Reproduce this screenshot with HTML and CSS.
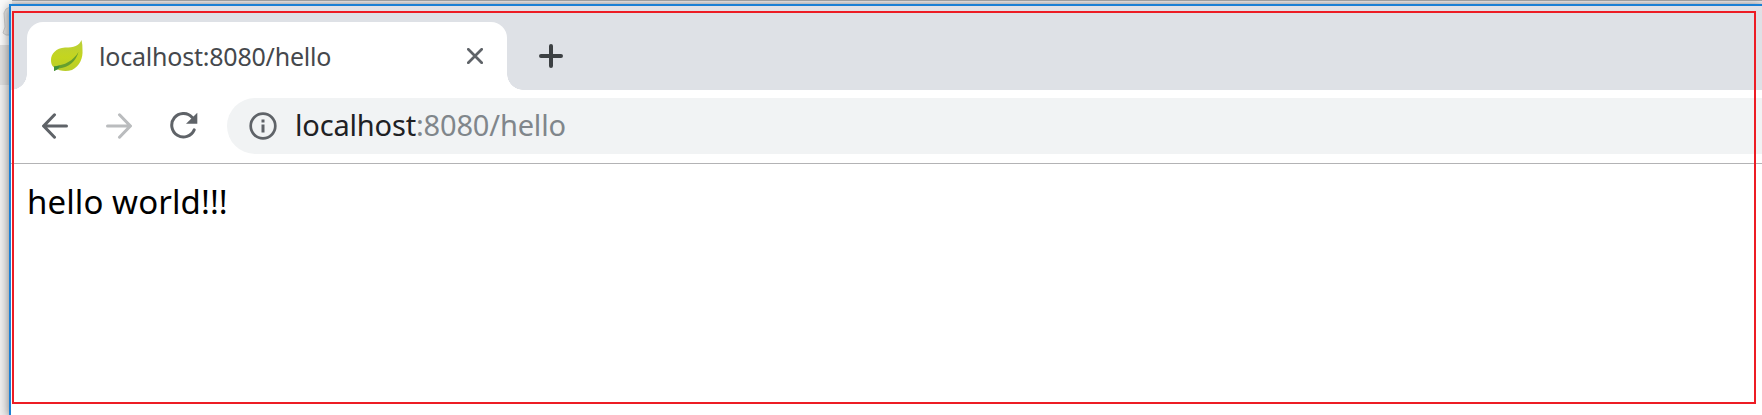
FILE: index.html
```
<!DOCTYPE html>
<html lang="en">
<head>
<meta charset="utf-8">
<title>localhost:8080/hello</title>
<link rel="stylesheet" href="styles.css">
</head>
<body>
<div class="desktop">
  <svg class="backdrop" width="12" height="415" viewBox="0 0 12 415"><path d="M0 0H12V45H0Z" fill="#fafafa"/><path d="M0 45H12V85H0Z" fill="#dfdfdf"/><path d="M12 6L6 9L4 13L5 27L3 33L6 35H12" fill="#e6e6e6" stroke="#ccc"/></svg>
  <div class="window">
    <header class="tabstrip">
      <div class="tab">
        <svg class="leaf" width="34" height="34" viewBox="0 0 34 34">
          <defs><linearGradient id="leaf" x2="0" y2="1"><stop stop-color="#b9cf3b"/><stop offset=".55" stop-color="#c4d51f"/><stop offset="1" stop-color="#b9cd2a"/></linearGradient></defs>
          <path d="M31.500 1C29 7 24 8.500 15 8.500C6 9 1 15 1 21C1 26 3 28 5 29C9 32 16 33 22 31C30 27 33 19 32.500 11Q32.500 5 31.500 1Z" fill="url(#leaf)"/>
          <path d="M4 27.500C15 26 23 22 28.500 13C26 22 19 28.500 9 29.500L4 32Z" fill="#669f2e"/>
          <path d="M4 27.500L10 26.500L8 30L4 32Z" fill="#3f913c"/>
        </svg>
        <span class="tab-title">localhost:8080/hello</span>
        <svg class="close" width="16" height="16" viewBox="0 0 16 16"><path d="M1.300 1.300L14.700 14.700M14.700 1.300L1.300 14.700" stroke="#5f6368" stroke-width="2.700" stroke-linecap="round"/></svg>
      </div>
      <svg class="plus" width="24" height="24" viewBox="0 0 24 24"><path d="M12 2V22M2 12H22" stroke="#3c4043" stroke-width="4" stroke-linecap="round"/></svg>
    </header>
    <nav class="toolbar">
      <svg class="nav-icon" width="26" height="26" viewBox="0 0 26 26"><path d="M24.500 13H2M12.500 1.800L1.700 13L12.500 24.200" fill="none" stroke="#5f6368" stroke-width="3" stroke-linecap="round"/></svg>
      <svg class="nav-icon" width="26" height="26" viewBox="0 0 26 26"><path d="M1.500 13H24M13.500 1.800L24.300 13L13.500 24.200" fill="none" stroke="#babcbe" stroke-width="3" stroke-linecap="round"/></svg>
      <svg class="nav-icon reload" width="28" height="28" viewBox="0 0 28 28"><path d="M22 5.200A11.700 11.700 0 1 0 24.200 17.800" fill="none" stroke="#5f6368" stroke-width="3" stroke-linecap="round"/><path d="M27.300 .7V11.700H16Z" fill="#5f6368"/></svg>
      <div class="address">
        <svg class="info" width="28" height="28" viewBox="0 0 28 28"><circle cx="14" cy="14" r="12.300" fill="none" stroke="#5f6368" stroke-width="2.700"/><path d="M12.500 7.500h3v3h-3zM12.500 12.500h3v8h-3z" fill="#5f6368"/></svg>
        <span class="url"><span class="host">localhost</span>:8080/hello</span>
      </div>
    </nav>
    <main class="page">hello world!!!</main>
  </div>
  <div class="outline"></div>
</div>
</body>
</html>
```
FILE: styles.css
```
body { margin: 0; overflow: hidden; font-family: "Noto Sans", "Open Sans", sans-serif; }
svg { display: block; flex: none; }
.desktop { position: relative; box-sizing: border-box; width: 1762px; height: 415px; padding: 4px 0 0 9px; overflow: hidden; background: #f0f0f0; }
.desktop::before { content: ""; position: absolute; left: 11px; top: 0; right: 0; height: 4px; background: linear-gradient(#aaa 0 1px, #f2eff1 1px, #e0dde0); }
.backdrop { position: absolute; left: 0; top: 0; }
.window { position: relative; box-sizing: border-box; height: 411px; border: solid #1a7fd5; border-width: 2px 0 0 2px; background: #fff; box-shadow: 0 2px 10px rgba(0,0,0,.5); }
.tabstrip { display: flex; align-items: flex-start; box-sizing: border-box; height: 84px; padding: 16px 0 0 16px; background: linear-gradient(#e3e0e5, #dee1e6 10px); overflow: hidden; }
.tab { position: relative; display: flex; align-items: center; box-sizing: border-box; width: 480px; height: 68px; padding: 0 24px 0 23px; border-radius: 16px 16px 0 0; background: #fff; }
.tab::before, .tab::after { content: ""; position: absolute; bottom: 0; width: 16px; height: 16px; }
.tab::before { left: -16px; background: radial-gradient(circle at 0 0, transparent 15.5px, #fff 16px); }
.tab::after { right: -16px; background: radial-gradient(circle at 100% 0, transparent 15.5px, #fff 16px); }
.leaf { margin-right: 15px; }
.tab-title { flex: 1; color: #45484c; font-size: 25px; line-height: 34px; letter-spacing: -.21px; white-space: nowrap; }
.plus { margin: 22px 0 0 32px; }
.toolbar { display: flex; align-items: center; box-sizing: border-box; height: 74px; padding: 0 0 1px 31px; border-bottom: 1px solid #b3b3b5; }
.nav-icon { margin-right: 38px; }
.reload { margin-right: 29px; }
.address { display: flex; align-items: center; flex: 1; height: 56px; padding-left: 22px; border-radius: 28px 0 0 28px; background: #f1f3f4; }
.info { margin-right: 18px; }
.url { padding-bottom: 2px; color: #80868b; font-size: 29px; line-height: 40px; letter-spacing: -.17px; white-space: nowrap; }
.host { color: #202124; }
.page { padding: 15px 0 0 16px; color: #000; font-size: 33px; line-height: 46px; letter-spacing: .09px; white-space: nowrap; }
.outline { position: absolute; left: 12px; top: 11px; box-sizing: border-box; width: 1744px; height: 393px; border: 2px solid #ed1c24; }
```
